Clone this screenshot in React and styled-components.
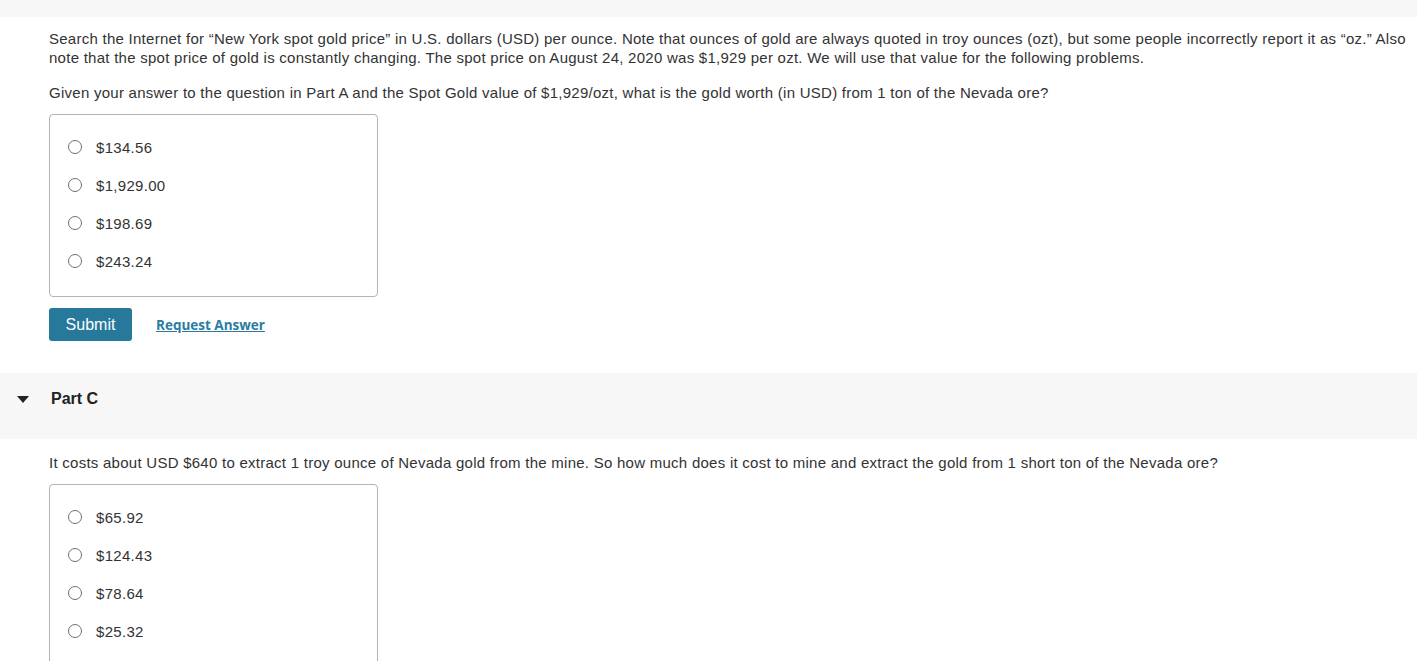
import React from 'react'
import styled, { createGlobalStyle } from 'styled-components'

const GlobalStyle = createGlobalStyle`
  html, body {
    margin: 0;
    padding: 0;
    background: #fff;
  }
  body {
    font-family: "Liberation Sans", Arial, sans-serif;
    color: #333;
    overflow: hidden;
  }
`

const Page = styled.div`
  width: 1417px;
  height: 661px;
  overflow: hidden;
`

const TopBand = styled.div`
  height: 17px;
  background: #f7f7f7;
`

const Section = styled.div`
  padding: ${(p) => p.$pad || '0 8px 0 49px'};
`

const Para = styled.p`
  margin: ${(p) => p.$margin || '0'};
  font-size: 15px;
  letter-spacing: 0.26px;
  line-height: 19px;
  color: #333;
`

const ChoiceBox = styled.div`
  width: 327px;
  border: 1px solid #b3b3b3;
  border-radius: 4px;
  padding: 13px 0 16px 0;
  margin-top: ${(p) => p.$top || '15px'};
  display: flex;
  flex-direction: column;
`

const Choice = styled.label`
  display: flex;
  align-items: center;
  height: 38px;
  padding-left: 18px;
  font-size: 15px;
  letter-spacing: 0.3px;
  color: #333;
  cursor: pointer;
`

const Radio = styled.span`
  width: 14px;
  height: 14px;
  box-sizing: border-box;
  border: 1px solid #6f6f6f;
  border-radius: 50%;
  background: #fff;
  margin-right: 14px;
  flex-shrink: 0;
`

const Actions = styled.div`
  display: flex;
  align-items: center;
  gap: 24px;
  margin-top: 11px;
`

const SubmitButton = styled.button`
  width: 83px;
  height: 33px;
  border: none;
  border-radius: 3px;
  background: #27799c;
  color: #fff;
  font-family: "Liberation Sans", Arial, sans-serif;
  font-size: 16px;
  padding: 0;
  cursor: pointer;
`

const LinkButton = styled.a`
  font-family: "Open Sans", "Liberation Sans", sans-serif;
  font-size: 13.5px;
  font-weight: 700;
  color: #2a7ba1;
  text-decoration: underline;
  cursor: pointer;
`

const PartHeader = styled.div`
  display: flex;
  align-items: center;
  height: 66px;
  box-sizing: border-box;
  margin-top: 32px;
  background: #f7f7f7;
  padding: 0 0 14px 17px;
`

const Caret = styled.span`
  width: 0;
  height: 0;
  border-left: 6px solid transparent;
  border-right: 6px solid transparent;
  border-top: 7px solid #222;
  margin-right: 22px;
`

const PartTitle = styled.h3`
  margin: 0;
  font-size: 16px;
  font-weight: 700;
  color: #222;
`

const choicesB = ['$134.56', '$1,929.00', '$198.69', '$243.24']
const choicesC = ['$65.92', '$124.43', '$78.64', '$25.32']

const Choices = ({ items, top }) => (
  <ChoiceBox $top={top}>
    {items.map((c) => (
      <Choice key={c}>
        <Radio aria-hidden="true" />
        <span>{c}</span>
      </Choice>
    ))}
  </ChoiceBox>
)

export default function App() {
  return (
    <Page>
      <GlobalStyle />
      <TopBand />
      <Section>
        <Para $margin="12px 0 0 0">
          Search the Internet for “New York spot gold price” in U.S. dollars (USD) per ounce. Note that ounces of gold are always quoted in troy ounces (ozt), but some people incorrectly report it as “oz.” Also note that the spot price of gold is constantly changing. The spot price on August 24, 2020 was $1,929 per ozt. We will use that value for the following problems.
        </Para>
        <Para $margin="16px 0 0 0">
          Given your answer to the question in Part A and the Spot Gold value of $1,929/ozt, what is the gold worth (in USD) from 1 ton of the Nevada ore?
        </Para>
        <Choices items={choicesB} top="12px" />
        <Actions>
          <SubmitButton>Submit</SubmitButton>
          <LinkButton>Request Answer</LinkButton>
        </Actions>
      </Section>
      <PartHeader>
        <Caret />
        <PartTitle>Part C</PartTitle>
      </PartHeader>
      <Section>
        <Para $margin="14px 0 0 0">
          It costs about USD $640 to extract 1 troy ounce of Nevada gold from the mine. So how much does it cost to mine and extract the gold from 1 short ton of the Nevada ore?
        </Para>
        <Choices items={choicesC} top="12px" />
      </Section>
    </Page>
  )
}
